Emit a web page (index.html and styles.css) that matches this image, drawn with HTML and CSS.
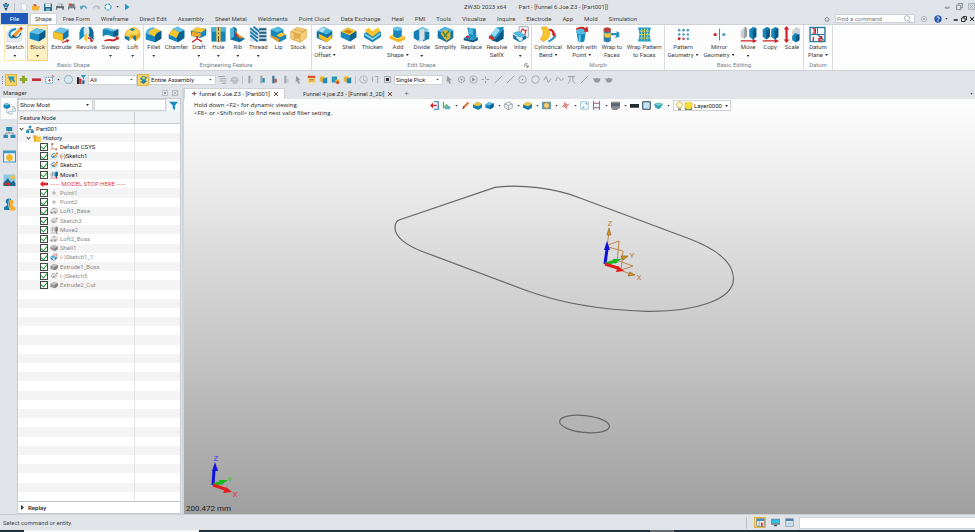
FILE: index.html
```html
<!DOCTYPE html>
<html lang="en">
<head>
<meta charset="utf-8">
<title>ZW3D 2023 x64</title>
<link rel="stylesheet" href="styles.css">
</head>
<body>
<svg class="defs" aria-hidden="true">
  <!-- ribbon icons, 24 unit grid -->
  <symbol id="sketch" viewBox="0 0 24 24"><path d="M1 9l5-5h16v15l-4 3H2z" fill="#e9eff5" stroke="#c3cfdb"/><path d="M14 4C8 5 4 9 5 13s6 4 9 0" fill="none" stroke="#1c8dc4" stroke-width="3"/><path d="M9 13c3 6 9 4 12-3" fill="none" stroke="#1c7fb4" stroke-width="2"/><path d="M10 12L20 2l3 3-10 10-4 1z" fill="#f79b22"/><path d="M19 3l2-2 3 3-2 2z" fill="#cf3529"/><path d="M9 16l1-4 3 3z" fill="#4a3520"/></symbol>
  <symbol id="block" viewBox="0 0 24 24"><path d="M1 9l9-6 13 3v10l-9 6-13-4z" fill="#1787bd"/><path d="M1 9l9-6 13 3-9 6z" fill="#63bfe4"/><path d="M14 12l9-6v10l-9 6z" fill="#085a86"/></symbol>
  <symbol id="extrude" viewBox="0 0 24 24"><path d="M1 8l9-6 12 3v10l-8 5-13-3z" fill="#0f7bb0"/><path d="M1 8l9-6 12 3-8 6z" fill="#6cc4e6"/><path d="M1 8l13 3v10L1 17z" fill="#f8c52e" stroke="#d99c16" stroke-width=".6"/><path d="M12 23l7-3v-2l4 2-3 4v-2l-7 2z" fill="#cc2024"/></symbol>
  <symbol id="revolve" viewBox="0 0 24 24"><path d="M2 20V9q2-8 7-8v13z" fill="#138bc2"/><path d="M22 20V9q-2-8-7-8v13z" fill="#0c6796"/><path d="M8 4q4-5 8 0v7l-4 3-4-3z" fill="#cfe6f1"/><path d="M9 14l4-4v13l-4-4z" fill="#f8c52e"/><path d="M14 16q5 0 6 4l2-1-2 4-4-2 2-1q-1-2-4-2z" fill="#cc2024"/></symbol>
  <symbol id="sweep" viewBox="0 0 24 24"><path d="M1 5q5-4 9-2 6 4 13 1v9q-7 4-13 0-4-2-9 2z" fill="#1584b9"/><path d="M1 5q5-4 9-2 6 4 13 1-5 5-11 3-5-3-11-2z" fill="#65c3e8"/><path d="M16 8q4 0 7-3v8q-3 3-7 2z" fill="#085a86"/><path d="M3 20q8-3 13-1l4-2-1-2h5l-1 5-2-1q-4 4-9 2-4-1-8 1z" fill="#cc2024"/></symbol>
  <symbol id="loft" viewBox="0 0 24 24"><path d="M1 14q0-7 8-11t14 5v8l-7 6-4-5-5 4z" fill="#eaae20"/><path d="M2 13q3-9 10-10t10 6l-6 5q-5-5-9 1z" fill="#fbd65a"/><path d="M1 14l6 1v6l-6-3zM12 15l5-2v8l-4-3zM8 5l4-2 4 2-4 2z" fill="#137cad"/></symbol>
  <symbol id="fillet" viewBox="0 0 24 24"><path d="M1 10Q3 3 11 2l12 5v11l-9 5-13-4z" fill="#1787bd"/><path d="M1 10Q3 3 11 2l4 2Q7 6 6 13z" fill="#54bbe2"/><path d="M5 11q1-6 9-8l9 4q-8 2-9 8z" fill="#f8c52e"/><path d="M14 15q2-6 9-8v11l-9 5z" fill="#085b88"/></symbol>
  <symbol id="chamfer" viewBox="0 0 24 24"><path d="M1 12l6-8 7-3 9 5v11l-9 6-13-5z" fill="#1787bd"/><path d="M7 4l7-3 9 5-7 3z" fill="#63c2e6"/><path d="M1 12l6-8 9 5-4 8z" fill="#f8c52e"/><path d="M16 9l7-3v11l-9 6-2-6z" fill="#0a6290"/></symbol>
  <symbol id="draft" viewBox="0 0 24 24"><path d="M1 7l8-5 14 2v9l-8 4-13-3z" fill="#1687bb"/><path d="M1 7l8-5 14 2-7 5z" fill="#f8c52e"/><path d="M3 8l12 2v6L2 14z" fill="#f3a92b"/><path d="M10 14v4l-7 5m7-5l7 4" stroke="#cc2024" stroke-width="2" fill="none"/></symbol>
  <symbol id="hole" viewBox="0 0 24 24"><path d="M2 2h20v20H2z" fill="#1583b7"/><path d="M2 2h20v6H2z" fill="#4bb5de"/><path d="M9 2h6v20H9z" fill="#f8cb38"/><path d="M12 1v6m0 2v3m0 2v9" stroke="#7b4a28" stroke-width="1.5"/></symbol>
  <symbol id="rib" viewBox="0 0 24 24"><path d="M2 4l5-3 4 3v10l12 4-8 5L2 19z" fill="#0d709f"/><path d="M2 4l5-3v14l-5 3z" fill="#50b8df"/><path d="M8 3q2 9 13 13l-4 2Q8 15 8 3z" fill="#e58a21"/><path d="M9 8l5 7-5-1z" fill="#c92825"/></symbol>
  <symbol id="thread" viewBox="0 0 24 24"><path d="M0 2h24v20H0z" fill="#d2dfe7"/><path d="M0 3l11 9m-11-4l11 9m-11-4l11 9M5 1l8 7" stroke="#1878a8" stroke-width="2.5"/><path d="M13 3h10v3H13zm0 5h10v3H13zm0 5h10v3H13zm0 5h10v3H13z" fill="#255f83"/></symbol>
  <symbol id="lip" viewBox="0 0 24 24"><path d="M1 5l11-4 7 4v5l4 3v5l-10 5L1 15z" fill="#1787bd"/><path d="M1 5l11-4 7 4-9 4z" fill="#55bbe0"/><path d="M9 13l7-4 7 3-9 4z" fill="#f8c52e"/><path d="M1 13l12 5v5L1 16z" fill="#e19b26"/></symbol>
  <symbol id="stock" viewBox="0 0 24 24"><path d="M1 8l9-6 13 3v12l-9 6-13-5z" fill="#f5d076" stroke="#d5a443"/><path d="M1 8l13 4 9-7M14 12v11M6 5l13 3M6 10v10" stroke="#c99739" fill="none"/><circle cx="10" cy="14" r="4" fill="#e3aa4a"/></symbol>
  <symbol id="face" viewBox="0 0 24 24"><path d="M1 8l9-7 13 6v10l-8 6-14-6z" fill="#0d75a9"/><path d="M2 7l8-6 13 6-8 5z" fill="#50b8df"/><path d="M4 11l12 6 6-5v6l-7 5-11-6z" fill="#f5bd2a"/><path d="M9 2l5 2-5 5-5-2z" fill="#b9e3f2"/></symbol>
  <symbol id="shell" viewBox="0 0 24 24"><path d="M1 8l10-6 12 5v9l-9 6-13-6z" fill="#1787bd"/><path d="M1 8l10-6 12 5-9 6z" fill="#f8c52e"/><path d="M5 8l6-3 7 3-5 3z" fill="#c97c1e"/><path d="M14 13l9-6v9l-9 6z" fill="#0a6290"/></symbol>
  <symbol id="thicken" viewBox="0 0 24 24"><path d="M0 11l5-4 7 5 9-7 3 4v6l-12 8L0 16z" fill="#1584b9"/><path d="M1 7l5-5 6 5 8-5 3 5-11 8z" fill="#f8c52e"/><path d="M1 10l11 7 11-8v3l-11 8L1 13z" fill="#8bd2ed"/></symbol>
  <symbol id="addshape" viewBox="0 0 24 24"><path d="M1 14l9-4 13 5v4l-9 4-13-5z" fill="#f3b62b"/><path d="M1 14l9-4 13 5-9 4z" fill="#fbd75c"/><path d="M6 4q6-6 12 0v10q-6 6-12 0z" fill="#1584b8"/><ellipse cx="12" cy="4" rx="6" ry="3" fill="#62c1e6"/></symbol>
  <symbol id="divide" viewBox="0 0 24 24"><path d="M1 8l9-5v15l-3 3-6-4zM14 7l9 1v10l-9 4z" fill="#137eb2"/><path d="M6 5l7-4 10 4-9 5z" fill="#70c8e9"/><path d="M9 6l7-3v16l-7 3z" fill="#d6e2eb" stroke="#aebfcb"/></symbol>
  <symbol id="simplify" viewBox="0 0 24 24"><path d="M1 7l10-6 12 5v11l-9 6-13-6z" fill="#0f76a9"/><path d="M1 7l10-6 12 5-9 6z" fill="#52b7df"/><path d="M5 11l6-6 8 4v8l-6 4z" fill="#d6b638"/><path d="M8 8l6 8m3-9l-7 8" stroke="#498339" stroke-width="2"/></symbol>
  <symbol id="replace" viewBox="0 0 24 24"><path d="M6 2l12 2 1 11-10 1z" fill="#1687bb"/><path d="M8 2l6 2v9l-6-2z" fill="#50b7df"/><path d="M1 17l6-4 14 3-7 4z" fill="#2297c8"/><path d="M1 17l13 3 7-4v4l-7 3-13-3z" fill="#085b88"/><path d="M4 14l2 5 3-5" fill="#cc2024"/></symbol>
  <symbol id="resolve" viewBox="0 0 24 24"><path d="M5 11l7-9 10-1v13l-8 4-13-1z" fill="#1e94c7"/><path d="M5 11l7-9 5 4-8 10z" fill="#9adcf2"/><path d="M12 17L22 5v13l-9 5-8-3z" fill="#075984"/><path d="M2 13l8 4-4 3-5-3z" fill="#d02b27"/></symbol>
  <symbol id="inlay" viewBox="0 0 24 24"><path d="M10 1h13v15H10z" fill="#fff" stroke="#70889b"/><path d="M12 11q2-9 4-6t4 0l-2 8" fill="none" stroke="#d43a35" stroke-width="1.8"/><path d="M1 10l8-3 10 6-8 4z" fill="#51b9df"/><path d="M1 12l10 5 9-4v5l-9 5-9-5z" fill="#14729f"/><path d="M5 15l10 1v4l-4 2z" fill="#dce9ef"/></symbol>
  <symbol id="bend" viewBox="0 0 24 24"><path d="M2 2l7-1q8 8 3 16l-7 5-5-4q8-6 2-16z" fill="#f8c52e" stroke="#d89a1b"/><path d="M12 22q8-4 10-9" stroke="#2393c2" stroke-width="3" fill="none"/><path d="M13 4q7 0 8 7l2-1-3 5-4-4 2 0q-1-4-5-5z" fill="#cc2024"/></symbol>
  <symbol id="morph" viewBox="0 0 24 24"><path d="M5 8q6-4 13 0l-2 13q-4 4-9 0z" fill="#1584b8"/><ellipse cx="11.500" cy="8" rx="7.500" ry="4" fill="#53bae1"/><path d="M4 4q7-5 14-1l2-3 2 8-7 0 2-2Q11 2 5 6z" fill="#cc2024"/><path d="M8 12l3 1v10l-3-2z" fill="#68c6e8"/></symbol>
  <symbol id="wrap" viewBox="0 0 24 24"><path d="M1 4q5-4 10 0v17q-5 4-10 0z" fill="#2f7dae"/><path d="M2 9q4 3 9 0v6q-5 3-9 0z" fill="#f8c52e"/><path d="M1 4q5-4 10 0v3q-5 3-10 0z" fill="#c93b35"/><path d="M11 10h9l-3-3 6 2v6l-6 2 2-4h-8z" fill="#278fbd"/></symbol>
  <symbol id="wrappat" viewBox="0 0 24 24"><path d="M3 2h18l-2 10 2 10H3l2-10z" fill="#1d9bc9"/><path d="M8 4v16m4-16v16m4-16v16M5 7h14M5 12h14M5 17h14" stroke="#f7dc50" stroke-width="1.5" stroke-dasharray="2 1"/></symbol>
  <symbol id="pattern" viewBox="0 0 24 24"><g fill="#4e9ec1"><circle cx="4" cy="4" r="2.4"/><circle cx="12" cy="4" r="2.4"/><circle cx="20" cy="4" r="2.4"/><circle cx="4" cy="12" r="2.4"/><circle cx="12" cy="12" r="2.4"/><circle cx="20" cy="12" r="2.4"/></g><circle cx="4" cy="20" r="2.7" fill="#c9242a"/><circle cx="12" cy="20" r="2.4" fill="#b05266"/><circle cx="20" cy="20" r="2.4" fill="#4e9ec1"/></symbol>
  <symbol id="mirror" viewBox="0 0 24 24"><path d="M12 1v22" stroke="#2890bf" stroke-width="2"/><circle cx="4" cy="12" r="3" fill="#c9242a"/><circle cx="20" cy="12" r="3" fill="#4e9ec1"/></symbol>
  <symbol id="move" viewBox="0 0 24 24"><path d="M1 16V7l6-6 3 2v11l-4 4z" fill="#c8ced2"/><path d="M7 1l3 2v11l-4 4V6z" fill="#939ca3"/><path d="M13 15V5l6-4 4 2v12l-5 4z" fill="#1587bb"/><path d="M18 6l5-3v12l-5 4z" fill="#07577f"/><path d="M1 20h17v-2l6 3-6 3v-2H1z" fill="#cc2024"/></symbol>
  <symbol id="copy" viewBox="0 0 24 24"><path d="M1 15V5l6-4 4 2v12l-5 4zM13 15V5l6-4 4 2v12l-5 4z" fill="#1587bb"/><path d="M6 6l5-3v12l-5 4zM18 6l5-3v12l-5 4z" fill="#07577f"/><path d="M1 20h17v-2l6 3-6 3v-2H1z" fill="#cc2024"/></symbol>
  <symbol id="scale" viewBox="0 0 24 24"><path d="M5 0l4 5H6.500v14H9l-4 5-4-5h2.500V5H1z" fill="#cc2024"/><path d="M13 7l5-6 6 3v16l-6 3-5-4z" fill="#ccd3d7"/><path d="M13 14l4-4 6 2v8l-5 3-5-3z" fill="#1587bb"/><path d="M18 14l5-2v8l-5 3z" fill="#07577f"/></symbol>
  <symbol id="datum" viewBox="0 0 24 24"><path d="M1.500 2h21v20h-21z" fill="#fff" stroke="#267fa9" stroke-width="2"/><path d="M12 2v10H2m10 0l10 9M12 12h10" stroke="#267fa9" stroke-width="1.500" fill="none"/><path d="M5 4h4v6H5m1-3h3M6 15v6m8-6h4v3h-4v3h5" stroke="#cc2024" stroke-width="1.800" fill="none"/></symbol>

  <!-- small icons, 12 unit grid -->
  <symbol id="logo" viewBox="0 0 12 12"><path d="M1 1l3 1 2 3 2-3 3-1-2 5H3z" fill="#197aa3"/><path d="M3 6l3 6 3-6-3 2z" fill="#16384c"/><path d="M4 0h4L6 4z" fill="#3b4c56"/></symbol>
  <symbol id="new" viewBox="0 0 12 12"><path d="M2 1h5l3 3v7H2z" fill="#fff" stroke="#b5bdc5"/></symbol>
  <symbol id="open" viewBox="0 0 12 12"><path d="M0 4h4l1 1h7l-2 6H0z" fill="#f2b632"/><path d="M1 2h5l1 3H4z" fill="#d9412c"/></symbol>
  <symbol id="save" viewBox="0 0 12 12"><path d="M0 1h12v11H0z" fill="#276b91"/><path d="M2 1h8v5H2z" fill="#e4edf2"/><path d="M3 8h6v4H3z" fill="#79b2cf"/></symbol>
  <symbol id="print" viewBox="0 0 12 12"><path d="M3 1h7L9 5H2zM0 5h12v5H0z" fill="#77818a"/><path d="M3 2h5v3H3zM2 8h7v3H2z" fill="#e3e8eb"/><path d="M0 5h12v2H0z" fill="#545f68"/></symbol>
  <symbol id="printx" viewBox="0 0 12 12"><path d="M0 5h11v5H0zM2 1h8v4H2z" fill="#76818b"/><path d="M2 8h7v3H2z" fill="#eee"/><path d="M1 1h5v3H1z" fill="#d54a38"/></symbol>
  <symbol id="undo" viewBox="0 0 12 12"><path d="M2 7q3-6 8 1" fill="none" stroke="#4999b3" stroke-width="1.800"/><path d="M0 4l1 6 4-3z" fill="#4999b3"/></symbol>
  <symbol id="redo" viewBox="0 0 12 12"><path d="M10 7q-3-6-8 1" fill="none" stroke="#b4bec4" stroke-width="1.800"/><path d="M12 4l-1 6-4-3z" fill="#b4bec4"/></symbol>
  <symbol id="ring" viewBox="0 0 12 12"><circle cx="6" cy="6" r="4.500" fill="#eef7fa" stroke="#3c9dbd" stroke-width="1.700" stroke-dasharray="4 1"/></symbol>
  <symbol id="play" viewBox="0 0 12 12"><path d="M3 1l7 5-7 5z" fill="#239ac8"/></symbol>
  <symbol id="pick" viewBox="0 0 12 12"><path d="M1 2l4 7 1-3 5 4-2-6 2-2z" fill="#2796bd"/><path d="M2 1l3 9 2-3 3 3" stroke="#7f8c48" fill="none"/></symbol>
  <symbol id="plus" viewBox="0 0 12 12"><path d="M4 1h4v3h3v4H8v3H4V8H1V4h3z" fill="#91a92f"/></symbol>
  <symbol id="minus" viewBox="0 0 12 12"><path d="M0 4.500h12v3.500H0z" fill="#bd2f38"/></symbol>
  <symbol id="boxpick" viewBox="0 0 12 12"><path d="M1 3h9v8H1z" fill="#f5f9fb" stroke="#397e9d" stroke-dasharray="2 1"/><path d="M6 5v4M4 7h4" stroke="#cb3037"/><path d="M9 1h2v2" stroke="#cb3037" fill="none"/></symbol>
  <symbol id="hex" viewBox="0 0 12 12"><path d="M3 1h6l3 5-3 5H3L0 6z" fill="#dce8ee" stroke="#739fb6"/></symbol>
  <symbol id="filter" viewBox="0 0 12 12"><path d="M0 3h3v9H0z" fill="#242424"/><path d="M3 5h3v7H3z" fill="#cc2934"/><path d="M7 7h3v5H7z" fill="#1e6d9a"/><path d="M5 0h7L9 4v4L8 4z" fill="#2299c5"/></symbol>
  <symbol id="asm" viewBox="0 0 12 12"><path d="M1 5l4-4 6 2-3 4 3 1-5 4-5-3 4-1z" fill="#2185a9"/><path d="M3 4l3-2 3 2-3 2z" fill="#d7d767"/></symbol>
  <symbol id="list" viewBox="0 0 12 12"><path d="M0 2h9M2 5h9M2 8h9M5 11h6" stroke="#a0a7ac" stroke-width="1.500"/></symbol>
  <symbol id="house" viewBox="0 0 12 12"><path d="M1 8q0-5 5-5t5 5zM4 8v3h5V8" fill="#cbd0d3" stroke="#a4abb0"/></symbol>
  <symbol id="bar" viewBox="0 0 12 12"><path d="M3 1h3v10H3z" fill="#a3abb0"/><path d="M6 5h3v5H6z" fill="#c4cbd0"/></symbol>
  <symbol id="barblue" viewBox="0 0 12 12"><path d="M3 1h3v10H3z" fill="#9ba4a9"/><path d="M6 4h3v6H6z" fill="#2790ba"/></symbol>
  <symbol id="barred" viewBox="0 0 12 12"><path d="M3 1h3v10H3z" fill="#31799d"/><path d="M6 5h3v5H6z" fill="#b74a44"/></symbol>
  <symbol id="cursor" viewBox="0 0 12 12"><path d="M3 1l6 6H6l2 4-2 1-2-4-2 2z" fill="#949ca2"/></symbol>
  <symbol id="form" viewBox="0 0 12 12"><path d="M1 1h10v10H1z" fill="#f8db82"/><path d="M1 1h10v3H1z" fill="#d35236"/><path d="M3 6h7M3 8h7" stroke="#a46e30"/></symbol>
  <symbol id="cubes" viewBox="0 0 12 12"><path d="M1 2h7v7H1z" fill="#e8b335"/><path d="M5 5l6-2v8H5z" fill="#2388b4"/></symbol>
  <symbol id="cubered" viewBox="0 0 12 12"><path d="M1 2h7v8H1z" fill="#2995b9"/><path d="M6 6h5v5H5z" fill="#e7ad31"/><circle cx="9" cy="10" r="2" fill="#d04131"/></symbol>
  <symbol id="clock" viewBox="0 0 12 12"><circle cx="6" cy="6" r="5" fill="none" stroke="#a2a9ae"/><path d="M6 3v4l3 1" stroke="#a2a9ae" fill="none"/></symbol>
  <symbol id="steps" viewBox="0 0 12 12"><path d="M2 2v7m3-7h4v9" stroke="#a7adb1" stroke-width="1.500" fill="none"/></symbol>
  <symbol id="stop" viewBox="0 0 12 12"><path d="M2 2h8v8H2z" fill="#dadddf" stroke="#8e9498"/><path d="M4 4h4v4H4z" fill="#343434"/></symbol>
  <symbol id="gear" viewBox="0 0 12 12"><circle cx="6" cy="6" r="4" fill="none" stroke="#969da2" stroke-width="1.500" stroke-dasharray="2 .7"/><circle cx="6" cy="6" r="1.500" fill="#969da2"/></symbol>
  <symbol id="target" viewBox="0 0 12 12"><circle cx="6" cy="6" r="5" fill="none" stroke="#969da2"/><circle cx="6" cy="6" r="1" fill="#858d92"/></symbol>
  <symbol id="playring" viewBox="0 0 12 12"><circle cx="6" cy="6" r="5" fill="none" stroke="#969da2"/><path d="M4 3l5 3-5 3z" fill="#969da2"/></symbol>
  <symbol id="circle" viewBox="0 0 12 12"><circle cx="6" cy="6" r="5" fill="none" stroke="#969da2"/></symbol>
  <symbol id="dots" viewBox="0 0 12 12"><path d="M1 6h3m2-4v3m1 1h4M6 8v3" stroke="#969da2" stroke-width="1.500"/></symbol>
  <symbol id="line" viewBox="0 0 12 12"><path d="M1 11L11 1" stroke="#8f989e" stroke-width="1.200"/></symbol>
  <symbol id="zig" viewBox="0 0 12 12"><path d="M1 7l3-5 3 8 4-5" fill="none" stroke="#8f989e" stroke-width="1.200"/></symbol>
  <symbol id="wave" viewBox="0 0 12 12"><path d="M1 8q2-8 5-3t5-1" fill="none" stroke="#8f989e" stroke-width="1.200"/></symbol>
  <symbol id="pi" viewBox="0 0 12 12"><path d="M1 2h10M1 11q4-1 3-8m4 0q-1 7 3 8" fill="none" stroke="#8f989e" stroke-width="1.200"/></symbol>
  <symbol id="teapot" viewBox="0 0 12 12"><path d="M1 4l3 1q2-3 5 0l2-1v3L9 10H4z" fill="#92999e"/></symbol>
  <symbol id="exit" viewBox="0 0 12 12"><path d="M5 1h6v10H5" fill="none" stroke="#2d79a0" stroke-width="1.500"/><path d="M0 6l4-4v3h5v2H4v3z" fill="#cf2f30"/></symbol>
  <symbol id="axes" viewBox="0 0 12 12"><path d="M2 1v8l4-4 4 4" stroke="#55aa51" stroke-width="1.500" fill="none"/><path d="M4 7h7v4H4z" fill="#5caec3"/></symbol>
  <symbol id="brush" viewBox="0 0 12 12"><path d="M2 11l1-4 6-6 2 2-6 6z" fill="#d77936"/><path d="M2 11l1-4 2 2z" fill="#823130"/></symbol>
  <symbol id="cubey" viewBox="0 0 12 12"><path d="M0 5l6-4 6 3v5l-5 3-7-3z" fill="#1780b1"/><path d="M0 5l6-4 6 3-5 3z" fill="#f2c642"/></symbol>
  <symbol id="cubew" viewBox="0 0 12 12"><path d="M1 4l5-3 5 3v5l-5 3-5-3zM1 4l5 2 5-2M6 6v6" fill="#f5f8fa" stroke="#80909b"/></symbol>
  <symbol id="shot" viewBox="0 0 12 12"><path d="M0 1h12v10H0z" fill="#5a9fba"/><circle cx="6" cy="6" r="4" fill="#f3d47a" stroke="#a26b2f"/></symbol>
  <symbol id="cross" viewBox="0 0 12 12"><path d="M6 3l3 3-3 3-3-3z" fill="#ead7d5" stroke="#c9605c"/><path d="M1 8l10-4M4 1l4 10" stroke="#c9605c"/></symbol>
  <symbol id="window" viewBox="0 0 12 12"><path d="M1 1h10v10H1z" fill="#f5fbfe" stroke="#81b4cf"/><path d="M3 9h2V7m2-4h2v2" stroke="#348cae" fill="none"/></symbol>
  <symbol id="ruler" viewBox="0 0 12 12"><path d="M2 0v12M10 0v12" stroke="#4b9bc0" stroke-width="1.500"/><path d="M2 3h8M2 9h8" stroke="#9c5a68" stroke-width="1.500"/></symbol>
  <symbol id="shade" viewBox="0 0 12 12"><path d="M0 1h12v8l-4 3H2L0 9z" fill="#878c91"/><path d="M0 3h12v4H0z" fill="#5d666e"/></symbol>
  <symbol id="dark" viewBox="0 0 12 12"><path d="M0 4h12v5H0z" fill="#202b31"/></symbol>
  <symbol id="sky" viewBox="0 0 12 12"><path d="M1 1h10v10H1z" fill="#c4e3f4" stroke="#263f4d" stroke-width="1.300"/></symbol>
  <symbol id="layers" viewBox="0 0 12 12"><path d="M0 4l6-2 6 2-3 5-3 2-4-2z" fill="#3ba6b8"/><path d="M1 4l5-1 5 1-5 2z" fill="#8ed4de"/></symbol>
  <symbol id="bulb" viewBox="0 0 12 12"><path d="M4 9Q2 6 2 4q1-3 4-3t4 3q0 2-2 5z" fill="#fff7cd" stroke="#d5a03c"/><path d="M4 10h4v2H4z" fill="#777"/></symbol>
  <symbol id="ball" viewBox="0 0 12 12"><path d="M1 2h10v10H1z" fill="#69896b"/><circle cx="6" cy="6" r="5" fill="#f5dd33"/></symbol>
  <symbol id="funnel" viewBox="0 0 12 12"><path d="M0 1h12L8 6v6L5 10V6z" fill="#168fbd"/></symbol>
  <symbol id="part" viewBox="0 0 12 12"><path d="M4 1h4v4H4zM0 8h5v4H0zM7 8h5v4H7z" fill="#2c91bd"/><path d="M6 5v2M2 8V7h8v1" stroke="#456" fill="none"/></symbol>
  <symbol id="folder" viewBox="0 0 12 12"><path d="M0 2h5l1 2h6v8H2z" fill="#efa823"/><path d="M4 5h8v7H4z" fill="#f7ca4e"/></symbol>
  <symbol id="csys" viewBox="0 0 12 12"><path d="M3 1v7l7 2M3 8l-2 3" stroke="#d06859" fill="none"/><path d="M2 0h3v3H2zM8 8h3v3H8z" fill="#b9806b"/></symbol>
  <symbol id="dot" viewBox="0 0 12 12"><path d="M6 3v6M3 6h6" stroke="#888" stroke-width="1.500"/></symbol>
  <symbol id="arrow" viewBox="0 0 12 12"><path d="M0 6l5-5v3h7v4H5v3z" fill="#e02027"/></symbol>
  <symbol id="tree" viewBox="0 0 24 24"><path d="M1 5l5-3 7 2v6l-6 3-6-3z" fill="#1684b2"/><path d="M1 5l5-3 7 2-6 3z" fill="#69c1de"/><path d="M7 14v6h5m2-12h7v4" stroke="#888" fill="none"/><path d="M11 17h6v5h-6zM18 12h5v5h-5z" fill="#fff" stroke="#579ab5"/></symbol>
  <symbol id="nodes" viewBox="0 0 24 24"><path d="M6 2h11v7H6zM1 16h8v6H1zM14 16h9v6h-9z" fill="#2589b4"/><path d="M11 9v4M5 16v-3h14v3" stroke="#555" fill="none"/></symbol>
  <symbol id="gift" viewBox="0 0 24 24"><path d="M1 2h22v20H1z" fill="#e8f4fa" stroke="#4797bb" stroke-width="2"/><path d="M1 2h22v4H1z" fill="#3b99c3"/><path d="M6 11l6-4 6 4v6l-6 4-6-4z" fill="#f2b526"/></symbol>
  <symbol id="photo" viewBox="0 0 24 24"><path d="M1 1h22v21H1z" fill="#8cc8e5"/><path d="M1 16l8-8 6 8 4-4 4 5v5H1z" fill="#1a668d"/><circle cx="18" cy="6" r="4" fill="#f8be36"/><path d="M1 17h8v-3l5 5-5 4v-3H1z" fill="#cc3028"/></symbol>
  <symbol id="user" viewBox="0 0 24 24"><path d="M5 7q0-6 6-6t5 7l-2 5 7 4v5H2v-5l6-4z" fill="#1b79a7"/><path d="M12 4q8-3 8 4l-3 6 6 4v5H12z" fill="#f0b12f"/><path d="M12 2q-2 6-2 13l4 7" stroke="#fff" fill="none"/></symbol>
  <symbol id="status" viewBox="0 0 12 12"><path d="M1 1h10v10H1z" fill="#fff" stroke="#587083"/><path d="M1 1h10v3H1z" fill="#508ab5"/><path d="M4 4v7" stroke="#587083"/><path d="M6 6h3v5H7z" fill="#c63b34"/></symbol>
  <symbol id="screen" viewBox="0 0 12 12"><path d="M0 1h12v8H0z" fill="#7b868d"/><path d="M1 2h10v5H1z" fill="#35bddd"/><path d="M4 9h4v2H4z" fill="#47535b"/></symbol>
  <symbol id="panel" viewBox="0 0 12 12"><path d="M1 1h10v10H1z" fill="#dceaf4" stroke="#6689a8"/><path d="M1 1h10v3H1z" fill="#577fad"/><path d="M3 7h6" stroke="#8ba9c1"/></symbol>
  <symbol id="wmin" viewBox="0 0 12 12"><path d="M2 7h7v2H2z" fill="none" stroke="currentColor" stroke-width="1.500"/></symbol>
  <symbol id="wmax" viewBox="0 0 12 12"><path d="M1 4h7v7H1zM4 4V1h7v7H8" fill="none" stroke="currentColor" stroke-width="1.800"/></symbol>
  <symbol id="wclose" viewBox="0 0 12 12"><path d="M2 2l8 8m0-8l-8 8" stroke="currentColor" stroke-width="2"/></symbol>
  <symbol id="xbox" viewBox="0 0 12 12"><path d="M1 1h10v10H1zM3 3l6 6m0-6L3 9" fill="none" stroke="#8c9398"/></symbol>
  <symbol id="pin" viewBox="0 0 12 12"><path d="M1 1h10v10H1z" fill="none" stroke="#999fa4"/><path d="M4 4h4v4H4z" fill="#999fa4"/></symbol>
  <symbol id="home" viewBox="0 0 12 12"><path d="M1 7l5-5 5 5M3 7v3h6V7" fill="none" stroke="#667078" stroke-width="1.500"/></symbol>
  <symbol id="lens" viewBox="0 0 12 12"><circle cx="6" cy="5" r="4" fill="none" stroke="#7f99aa"/><path d="M8 9l3 2" stroke="#7f99aa"/></symbol>
  <symbol id="help" viewBox="0 0 12 12"><circle cx="6" cy="6" r="5.500" fill="#275aa8"/><path d="M4 4q2-3 4 0 0 1-2 3m0 1v2" fill="none" stroke="#fff" stroke-width="1.500"/></symbol>
  <symbol id="corner" viewBox="0 0 12 12"><path d="M2 9V2h7M5 5l5 5m0-5v5H5" fill="none" stroke="#555" stroke-width="1.500"/></symbol>
</svg>

<header class="title-bar">
  <div class="quick">
    <svg><use href="#logo"/></svg><i class="sep"></i>
    <button aria-label="New"><svg><use href="#new"/></svg></button>
    <button aria-label="Open"><svg><use href="#open"/></svg></button>
    <button aria-label="Save"><svg><use href="#save"/></svg></button>
    <button aria-label="Print"><svg><use href="#print"/></svg></button>
    <button aria-label="Print preview"><svg><use href="#printx"/></svg></button>
    <button aria-label="Undo"><svg><use href="#undo"/></svg></button>
    <button aria-label="Redo"><svg><use href="#redo"/></svg></button>
    <button aria-label="Refresh"><svg><use href="#ring"/></svg></button>
    <button aria-label="Customize"><i class="caret"></i></button>
    <button aria-label="Play"><svg><use href="#play"/></svg></button>
  </div>
  <h1><span>ZW3D 2023 x64</span><span>Part - [funnel 6 Joe.Z3 - [Part001]]</span></h1>
  <div class="window-controls">
    <button aria-label="Minimize"><svg><use href="#wmin"/></svg></button>
    <button aria-label="Restore"><svg><use href="#wmax"/></svg></button>
    <button aria-label="Close"><svg><use href="#xbox"/></svg></button>
  </div>
</header>

<nav class="menu">
  <button class="file">File</button>
  <button class="tab current">Shape</button>
  <button class="tab">Free Form</button>
  <button class="tab">Wireframe</button>
  <button class="tab">Direct Edit</button>
  <button class="tab">Assembly</button>
  <button class="tab">Sheet Metal</button>
  <button class="tab">Weldments</button>
  <button class="tab">Point Cloud</button>
  <button class="tab">Data Exchange</button>
  <button class="tab">Heal</button>
  <button class="tab">PMI</button>
  <button class="tab">Tools</button>
  <button class="tab">Visualize</button>
  <button class="tab">Inquire</button>
  <button class="tab">Electrode</button>
  <button class="tab">App</button>
  <button class="tab">Mold</button>
  <button class="tab">Simulation</button>
  <div class="menu-end">
    <button aria-label="Collapse ribbon"><svg class="tiny"><use href="#home"/></svg></button>
    <label class="search"><input type="text" placeholder="Find a command" aria-label="Find a command"><svg><use href="#lens"/></svg></label>
    <button aria-label="Settings"><svg><use href="#gear"/></svg></button>
    <button class="help" aria-label="Help"><svg><use href="#help"/></svg><i class="caret"></i></button>
    <span class="doc-controls">
      <button aria-label="Minimize document"><svg class="tiny"><use href="#wmin"/></svg></button>
      <button aria-label="Restore document"><svg class="tiny"><use href="#wmax"/></svg></button>
      <button aria-label="Close document"><svg class="tiny"><use href="#wclose"/></svg></button>
    </span>
  </div>
</nav>

<section class="ribbon">
  <div class="group basic-shape">
    <div class="tools">
      <button class="tool framed"><svg><use href="#sketch"/></svg>Sketch<i class="caret"></i></button>
      <button class="tool framed on"><svg><use href="#block"/></svg>Block<i class="caret"></i></button>
      <button class="tool"><svg><use href="#extrude"/></svg>Extrude</button>
      <button class="tool"><svg><use href="#revolve"/></svg>Revolve</button>
      <button class="tool"><svg><use href="#sweep"/></svg>Sweep<i class="caret"></i></button>
      <button class="tool"><svg><use href="#loft"/></svg>Loft<i class="caret"></i></button>
    </div>
    <h2>Basic Shape</h2>
  </div>
  <div class="group engineering">
    <div class="tools">
      <button class="tool"><svg><use href="#fillet"/></svg>Fillet<i class="caret"></i></button>
      <button class="tool"><svg><use href="#chamfer"/></svg>Chamfer</button>
      <button class="tool"><svg><use href="#draft"/></svg>Draft<i class="caret"></i></button>
      <button class="tool"><svg><use href="#hole"/></svg>Hole<i class="caret"></i></button>
      <button class="tool"><svg><use href="#rib"/></svg>Rib<i class="caret"></i></button>
      <button class="tool"><svg><use href="#thread"/></svg>Thread<i class="caret"></i></button>
      <button class="tool"><svg><use href="#lip"/></svg>Lip</button>
      <button class="tool"><svg><use href="#stock"/></svg>Stock</button>
    </div>
    <h2>Engineering Feature</h2>
  </div>
  <div class="group edit-shape">
    <div class="tools">
      <button class="tool"><svg><use href="#face"/></svg>Face<span>Offset <i class="caret"></i></span></button>
      <button class="tool"><svg><use href="#shell"/></svg>Shell</button>
      <button class="tool"><svg><use href="#thicken"/></svg>Thicken</button>
      <button class="tool"><svg><use href="#addshape"/></svg>Add<span>Shape <i class="caret"></i></span></button>
      <button class="tool"><svg><use href="#divide"/></svg>Divide<i class="caret"></i></button>
      <button class="tool"><svg><use href="#simplify"/></svg>Simplify</button>
      <button class="tool"><svg><use href="#replace"/></svg>Replace</button>
      <button class="tool"><svg><use href="#resolve"/></svg>Resolve<span>SelfX</span></button>
      <button class="tool"><svg><use href="#inlay"/></svg>Inlay<i class="caret"></i></button>
    </div>
    <h2>Edit Shape</h2>
    <button class="launcher" aria-label="Edit Shape options"><svg><use href="#corner"/></svg></button>
  </div>
  <div class="group morphing">
    <div class="tools">
      <button class="tool"><svg><use href="#bend"/></svg>Cylindrical<span>Bend <i class="caret"></i></span></button>
      <button class="tool"><svg><use href="#morph"/></svg>Morph with<span>Point <i class="caret"></i></span></button>
      <button class="tool"><svg><use href="#wrap"/></svg>Wrap to<span>Faces</span></button>
      <button class="tool"><svg><use href="#wrappat"/></svg>Wrap Pattern<span>to Faces</span></button>
    </div>
    <h2>Morph</h2>
  </div>
  <div class="group editing">
    <div class="tools">
      <button class="tool"><svg class="mid"><use href="#pattern"/></svg>Pattern<span>Geometry <i class="caret"></i></span></button>
      <button class="tool"><svg class="mid"><use href="#mirror"/></svg>Mirror<span>Geometry <i class="caret"></i></span></button>
      <button class="tool"><svg><use href="#move"/></svg>Move<i class="caret"></i></button>
      <button class="tool"><svg><use href="#copy"/></svg>Copy</button>
      <button class="tool"><svg><use href="#scale"/></svg>Scale</button>
    </div>
    <h2>Basic Editing</h2>
  </div>
  <div class="group datums">
    <div class="tools">
      <button class="tool"><svg><use href="#datum"/></svg>Datum<span>Plane <i class="caret"></i></span></button>
    </div>
    <h2>Datum</h2>
  </div>
</section>

<section class="toolbar">
  <i class="grip"></i>
  <button class="hot" aria-label="Pick"><svg><use href="#pick"/></svg></button>
  <div class="set pick-set">
    <button aria-label="Add"><svg><use href="#plus"/></svg></button>
    <button aria-label="Remove"><svg><use href="#minus"/></svg></button>
    <button class="drop" aria-label="Window pick"><svg><use href="#boxpick"/></svg><i class="caret"></i></button>
    <button aria-label="Polygon pick"><svg><use href="#hex"/></svg></button>
    <button aria-label="Filter"><svg><use href="#filter"/></svg></button>
  </div>
  <span class="select filter-select"><select aria-label="Entity filter"><option>All</option></select></span>
  <button class="hot" aria-label="Scope"><svg><use href="#asm"/></svg></button>
  <span class="select scope-select"><select aria-label="Pick scope"><option>Entire Assembly</option></select></span>
  <div class="set scope-set">
    <button aria-label="Order"><svg><use href="#list"/></svg></button>
    <button aria-label="Owner"><svg><use href="#house"/></svg></button>
    <i class="sep"></i>
    <button aria-label="Filter face"><svg><use href="#bar"/></svg></button>
    <button aria-label="Filter shape"><svg><use href="#barblue"/></svg></button>
    <button aria-label="Filter edge"><svg><use href="#barred"/></svg></button>
    <button aria-label="Filter curve"><svg><use href="#bar"/></svg></button>
    <button aria-label="Cursor"><svg><use href="#cursor"/></svg></button>
    <button aria-label="Pick list"><svg><use href="#form"/></svg></button>
    <button aria-label="Bodies"><svg><use href="#cubes"/></svg></button>
    <button aria-label="Components"><svg><use href="#cubered"/></svg></button>
    <button aria-label="Parts"><svg><use href="#cubes"/></svg></button>
    <i class="sep"></i>
    <button aria-label="History"><svg><use href="#clock"/></svg></button>
    <button aria-label="Chain"><svg><use href="#steps"/></svg></button>
    <button aria-label="Stop"><svg><use href="#stop"/></svg></button>
  </div>
  <span class="select mode-select"><select aria-label="Pick mode"><option>Single Pick</option></select></span>
  <div class="set snap-set">
    <button aria-label="Free snap"><svg><use href="#cursor"/></svg></button>
    <button aria-label="Snap settings"><svg><use href="#gear"/></svg></button>
    <button aria-label="Snap on"><svg><use href="#playring"/></svg></button>
    <button aria-label="Grid"><svg><use href="#dots"/></svg></button>
    <button aria-label="End point"><svg><use href="#line"/></svg></button>
    <button aria-label="Mid point"><svg><use href="#line"/></svg></button>
    <button aria-label="Center"><svg><use href="#target"/></svg></button>
    <button aria-label="Circle"><svg><use href="#circle"/></svg></button>
    <button aria-label="Polyline"><svg><use href="#zig"/></svg></button>
    <button aria-label="Spline"><svg><use href="#wave"/></svg></button>
    <button aria-label="Tangent"><svg><use href="#pi"/></svg></button>
    <button aria-label="On line"><svg><use href="#line"/></svg></button>
    <button aria-label="Surface"><svg><use href="#teapot"/></svg></button>
    <button aria-label="Solid"><svg><use href="#teapot"/></svg></button>
  </div>
</section>

<main class="work">
  <aside class="manager">
    <header><h2>Manager</h2><button aria-label="Pin"><svg><use href="#pin"/></svg></button><button aria-label="Close manager"><svg><use href="#xbox"/></svg></button></header>
    <div class="manager-body">
      <nav class="side">
        <button class="current" aria-label="History manager"><svg><use href="#tree"/></svg></button>
        <button aria-label="Assembly manager"><svg><use href="#nodes"/></svg></button>
        <button aria-label="Solid manager"><svg><use href="#gift"/></svg></button>
        <button aria-label="Visual manager"><svg><use href="#photo"/></svg></button>
        <button aria-label="Role manager"><svg><use href="#user"/></svg></button>
      </nav>
      <div class="panel">
        <div class="panel-filter">
          <span class="select"><select aria-label="Show"><option>Show Most</option></select></span>
          <input type="text" aria-label="Filter tree">
          <button aria-label="Apply filter"><svg><use href="#funnel"/></svg></button>
        </div>
        <div class="panel-head"><span>Feature Node</span><span></span></div>
        <div class="rows">
          <div class="row root"><i class="chev"></i><svg><use href="#part"/></svg>Part001</div>
          <div class="row branch"><i class="chev"></i><svg><use href="#folder"/></svg>History</div>
          <label class="row leaf"><input type="checkbox" checked><svg><use href="#csys"/></svg>Default CSYS</label>
          <label class="row leaf"><input type="checkbox" checked><svg><use href="#sketch"/></svg>(-)Sketch1</label>
          <label class="row leaf"><input type="checkbox" checked><svg><use href="#sketch"/></svg>Sketch2</label>
          <label class="row leaf"><input type="checkbox" checked><svg><use href="#move"/></svg>Move1</label>
          <div class="row leaf halt"><svg><use href="#arrow"/></svg>----- MODEL STOP HERE -----</div>
          <label class="row leaf off"><input type="checkbox" checked><svg><use href="#dot"/></svg>Point1</label>
          <label class="row leaf off"><input type="checkbox" checked><svg><use href="#dot"/></svg>Point2</label>
          <label class="row leaf off"><input type="checkbox" checked><svg><use href="#loft"/></svg>Loft1_Base</label>
          <label class="row leaf off"><input type="checkbox" checked><svg><use href="#sketch"/></svg>Sketch3</label>
          <label class="row leaf off"><input type="checkbox" checked><svg><use href="#move"/></svg>Move2</label>
          <label class="row leaf off"><input type="checkbox" checked><svg><use href="#loft"/></svg>Loft2_Boss</label>
          <label class="row leaf off"><input type="checkbox" checked><svg><use href="#shell"/></svg>Shell1</label>
          <label class="row leaf off tinted"><input type="checkbox" checked><svg><use href="#inlay"/></svg>(-)Sketch1_1</label>
          <label class="row leaf off"><input type="checkbox" checked><svg><use href="#block"/></svg>Extrude1_Boss</label>
          <label class="row leaf off"><input type="checkbox" checked><svg><use href="#sketch"/></svg>(-)Sketch5</label>
          <label class="row leaf off"><input type="checkbox" checked><svg><use href="#block"/></svg>Extrude2_Cut</label>
          <div class="row"></div><div class="row"></div><div class="row"></div><div class="row"></div><div class="row"></div><div class="row"></div>
          <div class="row"></div><div class="row"></div><div class="row"></div><div class="row"></div><div class="row"></div><div class="row"></div>
          <div class="row"></div><div class="row"></div><div class="row"></div><div class="row"></div><div class="row"></div><div class="row"></div>
          <div class="row"></div><div class="row"></div><div class="row"></div><div class="row"></div><div class="row"></div>
        </div>
        <button class="replay"><i></i>Replay</button>
      </div>
    </div>
  </aside>

  <section class="document">
    <nav class="doc-tabs">
      <button class="doc current"><b>+</b>funnel 6 Joe.Z3 - [Part001]<svg><use href="#wclose"/></svg></button>
      <button class="doc">Funnel 4 joe.Z3 - [Funnel 3_2D]<svg><use href="#wclose"/></svg></button>
      <button class="add" aria-label="New tab">+</button>
      <button class="more" aria-label="More tabs"><i class="caret"></i></button>
    </nav>
    <div class="viewport">
      <svg class="scene" viewBox="184 99 791 415">
        <g fill="none" stroke="#666" stroke-width="1.200">
          <path d="M495 187.400C520 184 555 188 580 198L690 239C716 249 733.500 262 733.500 279C733 300 695 312 647 311.300C600 310 560 303 525 290L423 251.700C405 245 395 236 395 228C395 224 397 221 399 220Z"/>
          <ellipse cx="584.500" cy="424" rx="25" ry="8.500" transform="rotate(6 584.500 424)"/>
        </g>
        <g fill="none" stroke="#bb864b" stroke-width="1">
          <path d="M605 264l4-33M605 264l28 11M605 264l22-7M608 245l11-4-2 22M608 247l15 4-2 19M619 261l14 5-12 4"/>
        </g>
        <g fill="#dc961f" stroke="#6c4515" stroke-width=".5"><path d="M609 228l2 7h-4zM635 275l-7 1 2-4zM628 256l-5 4-2-4z"/></g>
        <g>
          <path d="M605 264l2-15" stroke="#1212dd" stroke-width="3"/><path d="M607 241l3 9h-6z" fill="#1212dd"/>
          <path d="M605 264l11-3" stroke="#10b818" stroke-width="3"/><path d="M621 259l-6 5-2-5z" fill="#10b818"/>
          <path d="M605 264l13 4" stroke="#e31b1b" stroke-width="3"/><path d="M624 271l-8 1 2-6z" fill="#e31b1b"/>
        </g>
        <g class="axis-label tan"><text x="610" y="226">Z</text><text x="632" y="258">Y</text><text x="639" y="280">X</text></g>
        <g>
          <path d="M213 485l1-15" stroke="#1212dd" stroke-width="3"/><path d="M215 462l3 9h-6z" fill="#1212dd"/>
          <path d="M213 485l10-3" stroke="#10b818" stroke-width="3"/><path d="M228 480l-7 5-2-5z" fill="#10b818"/>
          <path d="M213 485l12 4" stroke="#e31b1b" stroke-width="3"/><path d="M232 492l-9 1 3-6z" fill="#e31b1b"/>
        </g>
        <g class="axis-label"><text x="216" y="461" fill="#3737f0">Z</text><text x="230" y="482" fill="#25d32c">Y</text><text x="235" y="497" fill="#ef3030">X</text></g>
      </svg>
      <p class="hint">Hold down &lt;F2&gt; for dynamic viewing.<br>&lt;F8&gt; or &lt;Shift-roll&gt; to find next valid filter setting.</p>
      <div class="view-tools">
        <button aria-label="Exit"><svg><use href="#exit"/></svg></button>
        <button class="drop" aria-label="Align view"><svg><use href="#axes"/></svg><i class="caret"></i></button>
        <button aria-label="Appearance"><svg><use href="#brush"/></svg></button>
        <button aria-label="Face color"><svg><use href="#cubey"/></svg></button>
        <button class="drop" aria-label="Shaded"><svg><use href="#block"/></svg><i class="caret"></i></button>
        <button class="drop" aria-label="Wireframe view"><svg><use href="#cubew"/></svg><i class="caret"></i></button>
        <button class="drop" aria-label="Section"><svg><use href="#cubey"/></svg><i class="caret"></i></button>
        <button class="drop" aria-label="Zoom"><svg><use href="#shot"/></svg><i class="caret"></i></button>
        <button class="drop" aria-label="Rotate"><svg><use href="#cross"/></svg><i class="caret"></i></button>
        <button aria-label="Fit"><svg><use href="#window"/></svg></button>
        <button class="drop" aria-label="Measure"><svg><use href="#ruler"/></svg><i class="caret"></i></button>
        <button class="drop" aria-label="Background"><svg><use href="#shade"/></svg><i class="caret"></i></button>
        <button aria-label="Line width"><svg><use href="#dark"/></svg></button>
        <button aria-label="Line color"><svg><use href="#sky"/></svg></button>
        <button class="drop" aria-label="Layers"><svg><use href="#layers"/></svg><i class="caret"></i></button>
        <span class="select layer-select"><svg><use href="#bulb"/></svg><svg><use href="#ball"/></svg><select aria-label="Layer"><option>Layer0000</option></select></span>
      </div>
      <p class="scale-note">200.472 mm</p>
    </div>
  </section>
</main>

<footer class="status">
  <p>Select command or entity.</p>
  <div class="status-end">
    <button class="hot" aria-label="Manager panel"><svg><use href="#status"/></svg></button>
    <button aria-label="Display"><svg><use href="#screen"/></svg></button>
    <button aria-label="Output"><svg><use href="#panel"/></svg></button>
    <input type="text" aria-label="Command input">
  </div>
</footer>
<div class="desk"><i></i><i></i><i></i><i></i><i></i></div>
</body>
</html>
```
FILE: styles.css
```css
* { box-sizing: border-box; }
html, body { height: 100%; }
body {
  margin: 0;
  display: flex;
  flex-direction: column;
  overflow: hidden;
  background: #e0e4e8;
  color: #333;
  font: 6px/8px Roboto, "Open Sans", sans-serif;
}
h1, h2, p { margin: 0; font-size: 6px; font-weight: 400; }
button, input, select { font: inherit; color: inherit; margin: 0; padding: 0; border: 0; border-radius: 0; background: none; outline: 0; }
button { display: flex; align-items: center; justify-content: center; white-space: nowrap; }
svg { display: block; flex: none; width: 8px; height: 8px; }
svg.tiny { width: 6px; height: 6px; }
i { display: block; flex: none; }
.defs { position: absolute; width: 0; height: 0; }
.caret { width: 3px; height: 2px; background: #333; clip-path: polygon(0 0, 100% 0, 50% 100%); }
.sep { width: 1px; height: 8px; background: #bcc2c7; }
.hot { background: #fbd566; border: 1px solid #dfb54a; }

/* title bar */
.title-bar { display: grid; grid-template-columns: 1fr auto 1fr; align-items: center; height: 13px; flex: none; }
.quick { display: flex; align-items: center; gap: 4px; padding-left: 2px; }
.quick .sep { margin-right: 1px; }
.title-bar h1 { display: flex; gap: 12px; padding-left: 97px; color: #444; }
.window-controls { display: flex; justify-content: flex-end; gap: 5px; color: #8c9398; }
.window-controls svg { width: 7px; height: 7px; }

/* menu tabs */
.menu { display: flex; align-items: stretch; height: 11px; flex: none; gap: 1px; color: #444; }
.menu .file { width: 27px; margin: 0 1px; background: #2159b8; color: #fff; }
.tab { padding: 0 5px; }
.tab.current { padding: 0 4px; background: #fdfdfd; border: 1px solid #cfd4d8; border-bottom: 0; }
.menu-end { margin-left: auto; display: flex; align-items: center; gap: 5px; }
.menu-end .search { display: flex; align-items: center; width: 80px; height: 9px; padding: 0 3px 0 1px; background: #fff; border: 1px solid #cdd2d6; }
.search input { flex: 1; min-width: 0; height: 7px; }
.search input::placeholder { color: #777; opacity: 1; }
.help { gap: 3px; margin-left: 1px; }
.doc-controls { display: flex; gap: 2px; color: #222; }

/* ribbon */
.ribbon { display: flex; height: 47px; flex: none; background: #fdfdfd; border: 1px solid #cdd2d6; border-width: 1px 0; }
.group { position: relative; display: flex; flex-direction: column; border-right: 1px solid #d9dde0; color: #3f4347; }
.tools { display: flex; justify-content: space-around; flex: 1; }
.group h2 { text-align: center; color: #7d858c; height: 9px; }
.basic-shape { width: 144px; padding-left: 4px; }
.basic-shape .tools { justify-content: flex-start; gap: 1px; }
.engineering { width: 168px; padding-right: 3px; }
.edit-shape { width: 220px; }
.morphing { width: 133px; }
.editing { width: 139px; }
.datums { width: 29px; }
.tool { flex-direction: column; justify-content: flex-start; padding: 1px 1px 0; min-width: 17px; }
.basic-shape .tool { padding: 1px 2px 0; }
.tool svg { width: 17px; height: 17px; }
.tool svg.mid { width: 13px; height: 13px; margin: 2px; }
.tool > .caret { margin-top: 4px; }
.tool span { display: flex; align-items: center; gap: 2px; }
.basic-shape .framed { width: 22px; height: 36px; padding: 0; border: 1px solid #fae6ae; }
.basic-shape .framed.on { background: #fff0c2; border-color: #f3cf6f; }
.launcher { position: absolute; right: 2px; bottom: 2px; }
.launcher svg { width: 5px; height: 5px; }

/* selection toolbar */
.toolbar { display: flex; align-items: center; height: 17px; flex: none; }
.toolbar svg { width: 9px; height: 9px; }
.grip { width: 1px; height: 8px; margin: 0 2px; border-left: 1px dotted #8b9399; }
.toolbar .hot { width: 12px; height: 12px; }
.set { display: flex; align-items: center; justify-content: space-around; }
.drop { gap: 3px; }
.pick-set { width: 71px; }
.scope-set { width: 178px; }
.snap-set { width: 172px; }
.select { position: relative; display: flex; align-items: center; height: 10px; background: #fff; border: 1px solid #ccd2d6; }
.select select { appearance: none; flex: 1; width: 100%; height: 8px; padding-left: 1px; color: #222; }
.select::after { content: ""; position: absolute; right: 3px; top: 3px; width: 3px; height: 2px; background: #333; clip-path: polygon(0 0, 100% 0, 50% 100%); pointer-events: none; }
.filter-select { width: 49px; }
.scope-select { width: 67px; }
.mode-select { width: 49px; }

/* work area */
.work { flex: 1; display: flex; min-height: 0; }
.manager { width: 184px; flex: none; display: flex; flex-direction: column; border-right: 2px solid #d0d5d9; }
.manager header { display: flex; align-items: center; height: 9px; padding: 0 4px 0 3px; gap: 4px; flex: none; }
.manager header h2 { flex: 1; }
.manager header svg { width: 6px; height: 6px; }
.manager-body { flex: 1; display: flex; min-height: 0; padding: 1px 1px 0 1px; }
.side { display: flex; flex-direction: column; gap: 3px; width: 16px; }
.side button { height: 21px; }
.side .current { background: #fafbfb; }
.side svg { width: 13px; height: 13px; }
.panel { flex: 1; display: flex; flex-direction: column; border: 1px solid #c5cbd0; background: #fff; min-width: 0; }
.panel-filter { display: flex; height: 13px; flex: none; background: #e5e8eb; gap: 1px; }
.panel-filter .select { width: 75px; height: 12px; }
.panel-filter .select::after { top: 4px; }
.panel-filter input { flex: 1; min-width: 0; height: 12px; background: #fff; border: 1px solid #ccd2d6; }
.panel-filter button { width: 13px; background: #f4f6f7; }
.panel-filter svg { width: 9px; height: 9px; }
.panel-head { display: grid; grid-template-columns: 116px 1fr; height: 12px; flex: none; background: #f0f1f2; border-bottom: 1px solid #c5cbd0; }
.panel-head span { padding: 2px 2px 0; }
.panel-head span + span { border-left: 1px solid #c5cbd0; }
.rows { flex: 1; min-height: 0; display: grid; grid-auto-rows: 1fr; }
.row { display: flex; align-items: center; gap: 2px; min-height: 0; color: #222; background: linear-gradient(90deg, #fff 116px, #e3e5e7 116px, #e3e5e7 117px, #fff 117px); }
.row:nth-child(even) { background: linear-gradient(90deg, #f4f4f4 116px, #e0e2e4 116px, #e0e2e4 117px, #f4f4f4 117px); }
.row.root { padding-left: 1px; }
.row.branch { padding-left: 8px; }
.row.leaf { padding-left: 22px; }
.row.off { color: #8c8c8c; }
.off svg { filter: grayscale(1) opacity(.7); }
.tinted svg { filter: none; }
.row.halt { color: #e3292f; font-family: "Open Sans", sans-serif; }
.row input { appearance: none; flex: none; width: 8px; height: 8px; border: 1px solid #444; background: #fff; display: grid; place-items: center; }
.row input:checked::after { content: ""; width: 3px; height: 5px; margin-top: -1px; border: solid #1f9a35; border-width: 0 1px 1px 0; transform: rotate(40deg); }
.chev { width: 3px; height: 3px; margin: 0 1px; border: solid #444; border-width: 0 1px 1px 0; transform: rotate(45deg); }
.replay { height: 12px; flex: none; justify-content: flex-start; gap: 4px; padding-left: 3px; border-top: 1px solid #bcc2c7; font-weight: 700; color: #444; }
.replay i { width: 3px; height: 5px; background: #333; clip-path: polygon(0 0, 100% 50%, 0 100%); }

/* documents */
.document { flex: 1; display: flex; flex-direction: column; min-width: 0; }
.doc-tabs { display: flex; height: 11px; flex: none; color: #333; }
.doc { gap: 3px; padding: 0 5px 0 7px; }
.doc b { font-size: 8px; color: #7d4637; }
.doc + .doc { padding-left: 18px; }
.doc.current { background: #fdfdfd; border: 1px solid #ccd2d6; border-bottom: 0; }
.doc svg { width: 6px; height: 6px; color: #7b4338; }
.add { padding: 0 6px; color: #777; font-size: 8px; }
.more { margin-left: auto; padding-right: 2px; }
.viewport { position: relative; flex: 1; min-height: 0; background: linear-gradient(#fdfdfd, #f0f0f0 15%, #9f9f9f); }
.scene { position: absolute; inset: 0; width: 100%; height: 100%; }
.axis-label { font-size: 8px; text-anchor: middle; }
.tan { fill: #bd7b35; }
.hint { position: absolute; left: 10px; top: 2px; color: #222; font-family: "Open Sans", sans-serif; }
.view-tools { position: absolute; left: 246px; top: 1px; display: flex; align-items: center; gap: 3px; }
.view-tools svg { width: 9px; height: 9px; }
.view-tools .drop { gap: 4px; }
.layer-select { width: 58px; height: 11px; padding-left: 1px; }
.view-tools .select::after { top: 4px; right: 2px; }
.scale-note { position: absolute; left: 2px; bottom: 1px; font-size: 8px; color: #222; }

/* status bar */
.status { display: flex; align-items: center; justify-content: space-between; height: 16px; flex: none; padding-left: 3px; border-top: 1px solid #cbd0d4; color: #444; }
.status-end { display: flex; align-items: center; flex: none; width: 229px; padding-left: 7px; gap: 5px; border-left: 1px solid #b9bfc4; }
.status-end .hot { width: 12px; height: 11px; }
.status-end svg { width: 9px; height: 9px; }
.status-end input { flex: 1; min-width: 0; height: 12px; background: #fff; border: 1px solid #d0d5d9; border-right: 0; }
.desk { display: flex; height: 2px; flex: none; background: #1c2f3f; }
.desk i:nth-child(1) { width: 24px; }
.desk i:nth-child(2) { width: 175px; background: #f4f6f7; }
.desk i:nth-child(3) { flex: 1; }
.desk i:nth-child(4) { width: 24px; background: #646a72; }
.desk i:nth-child(5) { width: 301px; }
```
